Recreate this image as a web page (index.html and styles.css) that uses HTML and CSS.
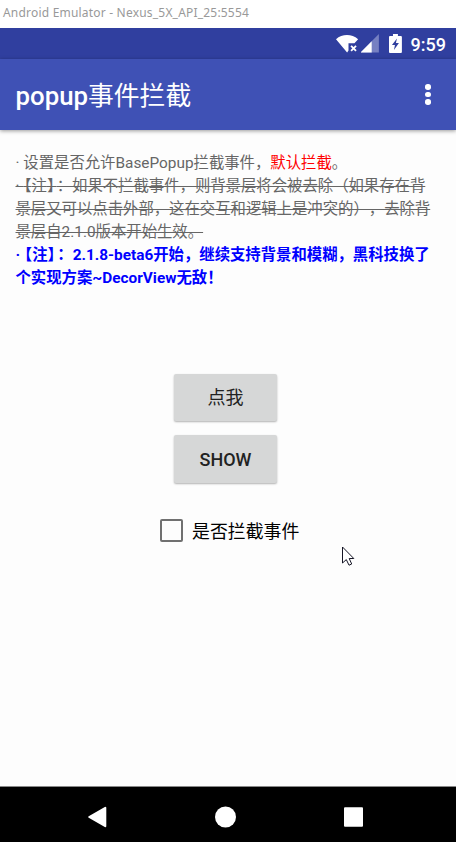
FILE: index.html
```html
<!DOCTYPE html>
<html lang="zh-CN">
<head>
<meta charset="utf-8">
<title>Android Emulator</title>
<link rel="stylesheet" href="styles.css">
</head>
<body>
<div class="window-title">Android Emulator - Nexus_5X_API_25:5554</div>
<div class="status-bar">
  <svg class="wifi" width="23" height="20" viewBox="0 0 23 20"><path fill="#fff" d="M0 5.2C6.3-.4 15.8-.4 22.3 5.2L18.6 9.3H12.6V16.6L11.2 18.5Z"/><path stroke="#fff" stroke-width="1.8" d="M15.2 11.8l5 5.2m0-5.2l-5 5.2"/></svg>
  <svg class="signal" width="19" height="19" viewBox="0 0 19 19"><path fill="#7680c2" d="M18 0V18.5H-.5Z"/><path fill="#fff" d="M10.8 7.2V18.5H-.5Z"/></svg>
  <svg class="battery" width="13" height="19" viewBox="0 0 13 19"><path fill="#fff" d="M1 2H4V0H9V2H12Q13 2 13 3V18Q13 19 12 19H1Q0 19 0 18V3Q0 2 1 2Z"/><path fill="#303f9f" d="M8 4.5L3 11H6L5 16L10 9H7Z"/></svg>
  <span class="clock">9:59</span>
</div>
<header class="toolbar">
  <h1 class="title"><span class="latin">popup</span>事件拦截</h1>
  <div class="overflow"><i class="dot"></i><i class="dot"></i><i class="dot"></i></div>
</header>
<main class="content">
  <div class="description">
    <div class="line">· 设置是否允许BasePopup拦截事件，<span class="red">默认拦截</span>。</div>
    <div class="line struck"><span class="bullet">·</span><span class="open">【</span>注<span class="close">】</span>：如果不拦截事件，则背景层将会被去除（如果存在背</div>
    <div class="line struck">景层又可以点击外部，这在交互和逻辑上是冲突的），去除背</div>
    <div class="line struck">景层自2.1.0版本开始生效。</div>
    <div class="line notice"><span class="bullet">·</span><span class="open">【</span>注<span class="close">】</span>：2.1.8-beta6开始，继续支持背景和模糊，黑科技换了</div>
    <div class="line notice">个实现方案~DecorView无敌！</div>
  </div>
  <div class="actions">
    <button class="btn">点我</button>
    <button class="btn btn-show">SHOW</button>
  </div>
  <label class="check"><span class="box"></span><span>是否拦截事件</span></label>
</main>
<nav class="nav-bar">
  <svg width="20" height="22" viewBox="0 0 20 22"><path fill="#fff" stroke="#fff" stroke-width="2" stroke-linejoin="round" d="M2.2 11L18.3 1.8V20.2Z"/></svg>
  <svg width="22" height="22" viewBox="0 0 22 22"><circle cx="10.5" cy="11" r="10.5" fill="#fff"/></svg>
  <svg width="20" height="20" viewBox="0 0 20 20"><rect x="0" y=".2" width="19" height="19.5" rx="1" fill="#fff"/></svg>
</nav>
<svg class="pointer" width="14" height="22" viewBox="0 0 14 22"><path fill="#fff" stroke="#151525" stroke-width="1" d="M.5 1V17L4.3 13.6L7 19.2L9.7 18L7.2 12.5H11.8Z"/></svg>
</body>
</html>
```
FILE: styles.css
```css
* { box-sizing: border-box; }
body {
  margin: 0;
  width: 456px;
  height: 842px;
  overflow: hidden;
  display: flex;
  flex-direction: column;
  background: #fdfdfd;
  font-family: Roboto, "Noto Sans CJK SC", sans-serif;
}
.window-title {
  height: 28px;
  padding-left: 3px;
  background: #fff;
  color: #999;
  font: 12px/26px "Noto Sans", sans-serif;
  letter-spacing: .2px;
  white-space: nowrap;
}
.status-bar {
  height: 31px;
  flex: none;
  display: flex;
  align-items: flex-start;
  padding: 6px 10px 0 336px;
  background: #303f9f;
  color: #fff;
}
.signal { margin-left: 2px; }
.battery { margin-left: 9px; }
.clock {
  margin-left: 9px;
  font-size: 18px;
  font-weight: 500;
  line-height: 21px;
}
.toolbar {
  height: 71px;
  flex: none;
  display: flex;
  align-items: center;
  justify-content: space-between;
  padding: 0 25.5px 0 15.5px;
  background: #3f51b5;
  color: #fff;
  box-shadow: 0 1px 4px rgba(0, 0, 0, .4);
}
.title {
  margin: 2px 0 0;
  font-size: 25.8px;
  font-weight: 400;
  line-height: 36px;
}
.latin { font-weight: 500; }
.overflow { display: flex; flex-direction: column; gap: 2.2px; }
.dot { width: 5.5px; height: 5.5px; border-radius: 50%; background: #fff; }
.content { flex: 1; padding: 22px 15px 0; }
.description {
  height: 138px;
  padding-left: .5px;
  color: #666;
  font-size: 15.37px;
  line-height: 23px;
  text-spacing-trim: space-all;
}
.line { height: 23px; white-space: nowrap; }
.red { color: #f00; }
.struck { text-decoration: line-through; text-decoration-thickness: 1.4px; }
.notice { color: #00f; font-weight: 700; }
.bullet { letter-spacing: 4.3px; }
.open, .close { font-feature-settings: "halt" 1; }
.close { letter-spacing: 2.1px; }
.actions { display: flex; flex-direction: column; align-items: center; gap: 14px; padding: 84px 5px 0 0; }
.btn {
  width: 103px;
  height: 47px;
  padding: 0;
  border: 0;
  border-radius: 2px;
  background: #d6d7d7;
  color: #222;
  font: 400 18px/47px Roboto, "Noto Sans CJK SC", sans-serif;
  box-shadow: 0 1px 2px rgba(0, 0, 0, .3);
}
.btn-show { height: 48px; font-weight: 500; line-height: 49px; }
.check { display: flex; align-items: center; gap: 9px; margin: 34px 0 0 145px; height: 26px; font-size: 17.9px; color: #000; white-space: nowrap; }
.box { width: 23px; height: 23px; border: 2px solid #707070; border-radius: 2px; }
.nav-bar {
  height: 56px;
  flex: none;
  display: flex;
  align-items: center;
  justify-content: space-between;
  padding: 5px 92px 0 87px;
  border-top: 1px solid #888;
  background: #000;
}
.pointer { position: absolute; left: 342px; top: 546px; }
```
